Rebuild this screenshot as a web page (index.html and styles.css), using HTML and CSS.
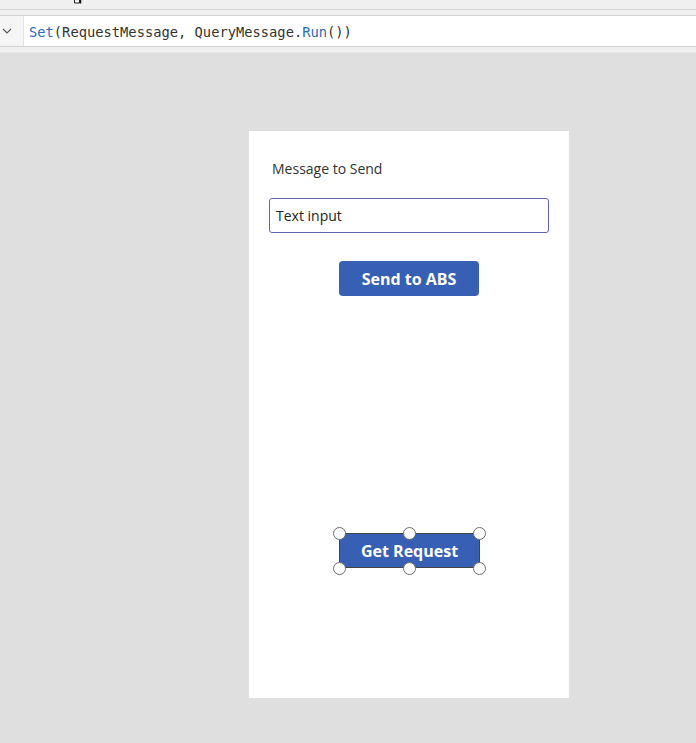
FILE: index.html
```html
<!DOCTYPE html>
<html>
<head>
<meta charset="utf-8">
<link rel="stylesheet" href="styles.css">
</head>
<body>
<div class="topbar">
  <svg class="glyph" width="10" height="4" viewBox="0 0 10 4"><path d="M1.5 0V3H6.5V0" fill="none" stroke="#222" stroke-width="1"/><path d="M7.5 0V3.5" stroke="#111" stroke-width="1.5"/></svg>
</div>
<div class="spacer"></div>
<div class="formula">
  <div class="chev">
    <svg width="10" height="6" viewBox="0 0 10 6"><path d="M1 1L5 5L9 1" fill="none" stroke="#555" stroke-width="1.1"/></svg>
  </div>
  <div class="code"><span class="fn">Set</span>(RequestMessage, QueryMessage.<span class="fn">Run</span>())</div>
</div>
<div class="spacer2"></div>
<div class="canvas">
  <div class="screen">
    <div class="label">Message to Send</div>
    <div class="input">Text input</div>
    <div class="btn send">Send to ABS</div>
    <div class="selected">
      <div class="btn get">Get Request</div>
      <span class="h tl"></span><span class="h tm"></span><span class="h tr"></span>
      <span class="h bl"></span><span class="h bm"></span><span class="h br"></span>
    </div>
  </div>
</div>
</body>
</html>
```

FILE: styles.css
```css
html, body {
  margin: 0;
  padding: 0;
}
body {
  width: 696px;
  height: 743px;
  overflow: hidden;
  background: #dfdfdf;
  font-family: "Open Sans", "Noto Sans", sans-serif;
}
.topbar {
  height: 9px;
  background: #f0f0f0;
  border-bottom: 1px solid #d4d4d4;
  position: relative;
}
.glyph {
  position: absolute;
  left: 73px;
  top: 0;
}
.spacer {
  height: 5px;
  background: #f0f0f0;
}
.formula {
  display: flex;
  height: 30px;
  background: #fff;
  border-top: 1px solid #d2d2d2;
  border-bottom: 1px solid #d2d2d2;
}
.chev {
  background: #f5f5f5;
  border-right: 1px solid #e2e2e2;
  display: flex;
  align-items: center;
  justify-content: center;
  padding-right: 9px;
  box-sizing: border-box;
  width: 24px;
}
.code {
  font-family: "DejaVu Sans Mono", monospace;
  font-size: 13.75px;
  color: #333;
  line-height: 30px;
  padding-left: 5px;
  padding-top: 1px;
}
.fn {
  color: #2f6ab3;
}
.spacer2 {
  height: 5px;
  background: #f0f0f0;
  border-bottom: 1px solid #e6e6e6;
}
.canvas {
  padding: 78px 0 0 249px;
}
.screen {
  width: 320px;
  height: 567px;
  background: #fff;
  box-sizing: border-box;
  padding: 29px 20px 0 20px;
  display: flex;
  flex-direction: column;
}
.label {
  font-size: 14px;
  color: #333;
  padding-left: 3px;
  line-height: 18px;
}
.input {
  margin-top: 20px;
  height: 35px;
  width: 280px;
  box-sizing: border-box;
  border: 1px solid #5e67a3;
  border-radius: 3px;
  font-size: 14px;
  color: #222;
  padding-left: 6px;
  line-height: 33px;
}
.btn {
  background: #3760b5;
  color: #fff;
  font-weight: 700;
  font-size: 16px;
  height: 35px;
  display: flex;
  align-items: center;
  justify-content: center;
  box-sizing: border-box;
}
.send {
  margin-top: 28px;
  margin-left: 70px;
  width: 140px;
  border-radius: 4px;
}
.selected {
  position: relative;
  margin-top: 237px;
  margin-left: 70px;
  width: 141px;
}
.get {
  width: 141px;
  border: 1px solid #444;
}
.h {
  position: absolute;
  width: 13px;
  height: 13px;
  box-sizing: border-box;
  border-radius: 50%;
  background: #fff;
  border: 1px solid #6e6e6e;
}
.tl { left: -6px; top: -6px; }
.tm { left: 64px; top: -6px; }
.tr { left: 134px; top: -6px; }
.bl { left: -6px; top: 29px; }
.bm { left: 64px; top: 29px; }
.br { left: 134px; top: 29px; }
```
